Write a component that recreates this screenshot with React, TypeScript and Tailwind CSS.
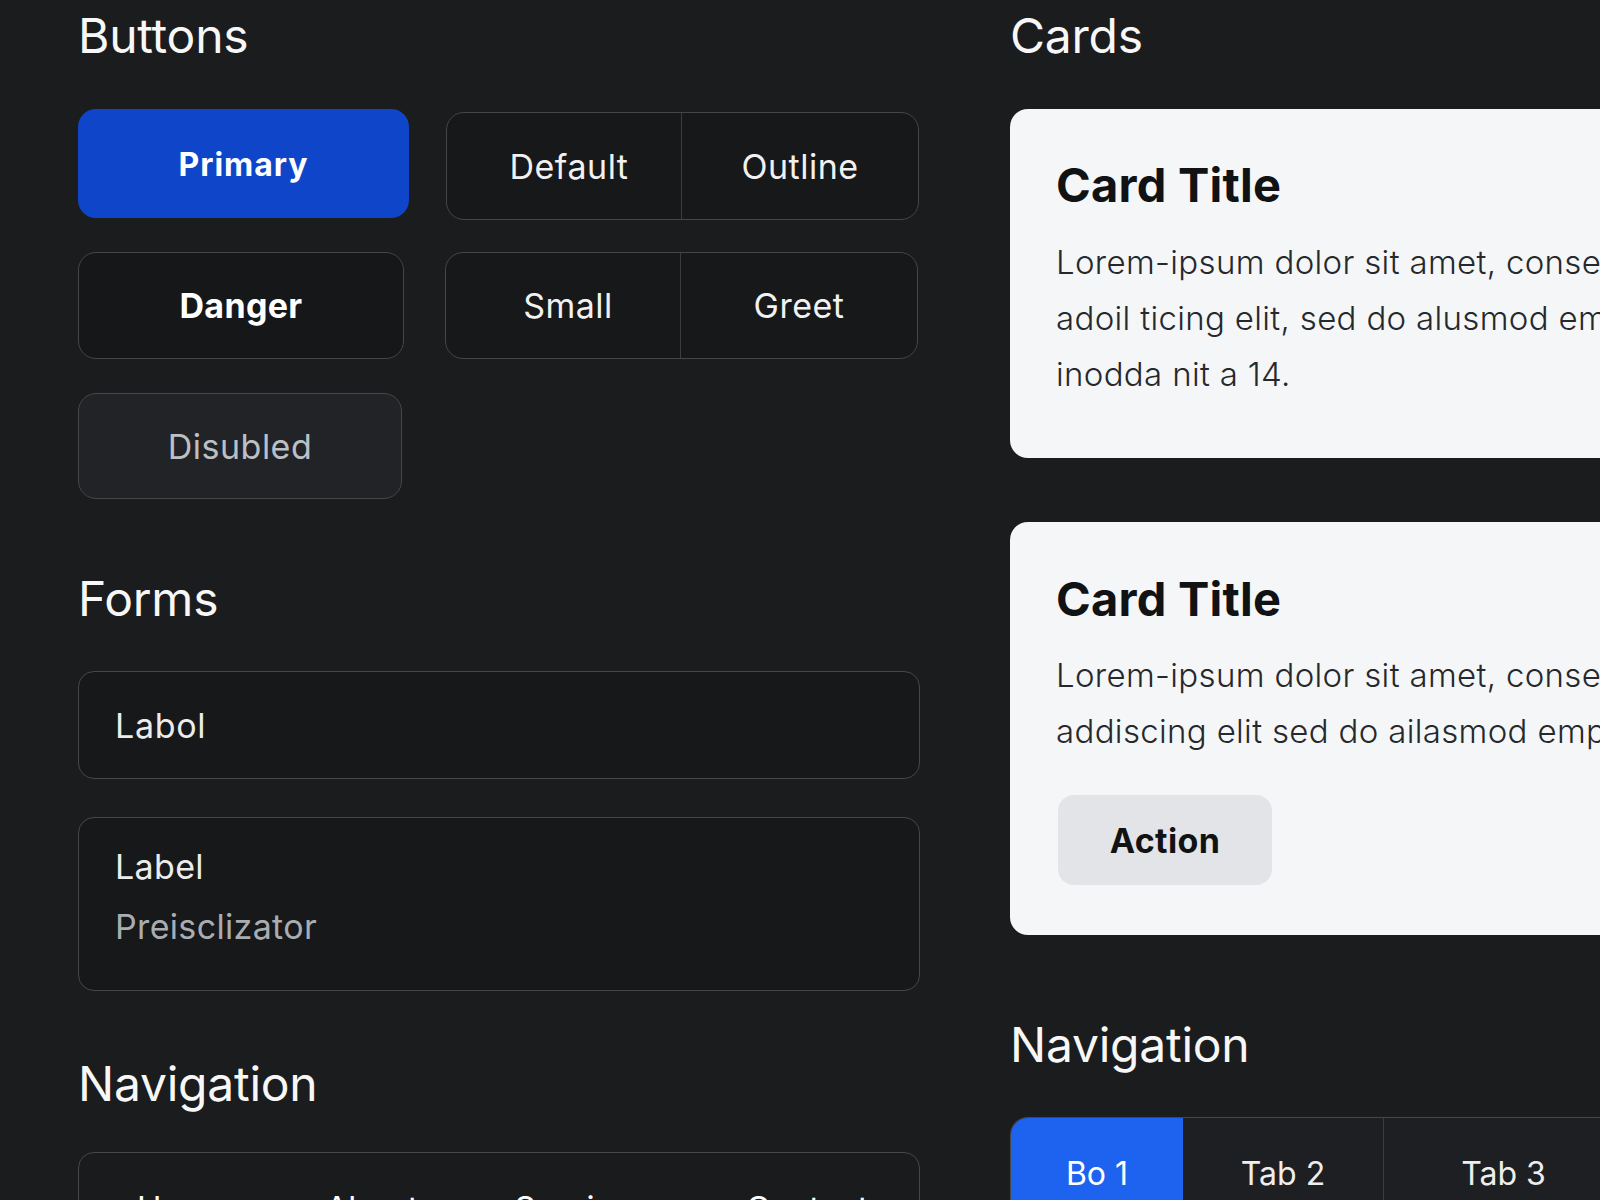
import React from 'react';

const heading = "text-[48px] leading-[56px] font-normal text-[#f7f7f7] tracking-[-0.005em]";

function SplitButton({ left, right, h }: { left: string; right: string; h: string }) {
  return (
    <div className={`flex ${h} w-[473px] rounded-[18px] border border-[#45464a] bg-[#17181a] text-[34px] tracking-[0.015em] text-[#f1f1f1]`}>
      <div className="flex w-[235px] items-center justify-center border-r border-[#3c3d40] pl-[10px]">{left}</div>
      <div className="flex flex-1 items-center justify-center">{right}</div>
    </div>
  );
}

export default function App() {
  return (
    <div className="h-[1200px] w-full overflow-hidden bg-[#1b1c1e] font-['Inter',sans-serif] text-white">
      <div className="flex gap-[90px] pl-[78px] pt-[8px]">
        {/* left column */}
        <section className="w-[842px] shrink-0">
          <h2 className={heading}>Buttons</h2>

          <div className="mt-[45px] flex items-start gap-[37px]">
            <button className="h-[109px] w-[331px] rounded-[18px] bg-[#0f46c9] pt-[3px] text-[32px] font-bold tracking-[0.03em] text-white">
              Primary
            </button>
            <div className="mt-[3px]">
              <SplitButton left="Default" right="Outline" h="h-[108px]" />
            </div>
          </div>

          <div className="mt-[32px] flex items-start gap-[41px]">
            <button className="h-[107px] w-[326px] rounded-[18px] border border-[#45464a] bg-[#161719] text-[34px] font-bold tracking-[0.01em] text-white">
              Danger
            </button>
            <SplitButton left="Small" right="Greet" h="h-[107px]" />
          </div>

          <div className="mt-[34px]">
            <button
              disabled
              className="h-[106px] w-[324px] rounded-[18px] border border-[#45474b] bg-[#222326] text-[34px] tracking-[0.015em] text-[#bcc0c5]"
            >
              Disubled
            </button>
          </div>

          <h2 className={`${heading} mt-[72px]`}>Forms</h2>

          <div className="mt-[44px] flex h-[108px] items-center rounded-[16px] border border-[#46474b] bg-[#17181a] pl-[36px] text-[34px] tracking-[0.02em] text-[#ececec]">
            Labol
          </div>

          <div className="mt-[38px] h-[174px] rounded-[16px] border border-[#46474b] bg-[#17181a] pl-[36px] pt-[31px] text-[34px] tracking-[0.01em]">
            <div className="leading-[36px] text-[#ececec]">Label</div>
            <div className="mt-[24px] leading-[36px] text-[#a9adb2]">Preisclizator</div>
          </div>

          <h2 className={`${heading} mt-[65px]`}>Navigation</h2>

          <nav className="mt-[40px] h-[120px] rounded-[16px] border border-[#46474b] bg-[#1a1b1d] pl-[58px] pt-[37px]">
            <ul className="flex gap-[96px] text-[33px] leading-[36px] text-white">
              <li>Home</li>
              <li>About</li>
              <li>Services</li>
              <li>Contact</li>
            </ul>
          </nav>
        </section>

        {/* right column */}
        <section className="w-[842px] shrink-0">
          <h2 className={heading}>Cards</h2>

          <div className="mt-[45px] h-[349px] rounded-[18px] bg-[#f4f6f8] px-[46px] pt-[48px]">
            <h3 className="text-[47px] font-bold leading-[56px] tracking-[0.005em] text-[#111214]">Card Title</h3>
            <p className="mt-[21px] whitespace-nowrap text-[33px] font-light leading-[56px] tracking-[0.01em] text-[#26282c]">
              Lorem-ipsum dolor sit amet, consectetur
              <br />
              adoil ticing elit, sed do alusmod empor
              <br />
              inodda nit a 14.
            </p>
          </div>

          <div className="mt-[64px] h-[413px] rounded-[18px] bg-[#f4f6f8] px-[46px] pt-[49px]">
            <h3 className="text-[47px] font-bold leading-[56px] tracking-[0.005em] text-[#111214]">Card Title</h3>
            <p className="mt-[20px] whitespace-nowrap text-[33px] font-light leading-[56px] tracking-[0.01em] text-[#26282c]">
              Lorem-ipsum dolor sit amet, consectetur
              <br />
              addiscing elit sed do ailasmod empor
            </p>
            <button className="mt-[36px] ml-[2px] h-[90px] w-[214px] rounded-[16px] bg-[#e2e4e7] text-[34px] font-bold tracking-[0.01em] text-[#111214]">
              Action
            </button>
          </div>

          <h2 className={`${heading} mt-[82px]`}>Navigation</h2>

          <div className="mt-[44px] flex h-[120px] overflow-hidden rounded-tl-[18px] border-l border-t border-[#46474b] bg-[#1e1f22] text-[32px] leading-[40px]">
            <div className="w-[172px] bg-[#1e63ef] pt-[36px] text-center text-white">Bo 1</div>
            <div className="w-[201px] border-r border-[#3c3d40] pt-[36px] text-center text-[#eeeeee]">Tab 2</div>
            <div className="w-[240px] border-r border-[#3c3d40] pt-[36px] text-center text-[#eeeeee]">Tab 3</div>
          </div>
        </section>
      </div>
    </div>
  );
}
